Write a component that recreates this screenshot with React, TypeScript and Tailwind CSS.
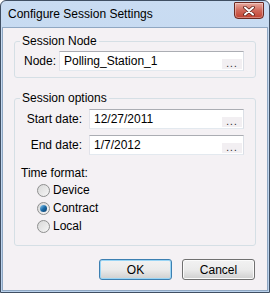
import React from 'react';

const font = { fontFamily: '"Liberation Sans", "Segoe UI", Tahoma, sans-serif' };

function BrowseField({ value, width }: { value: string; width: string }) {
  return (
    <div className={`relative h-[20px] ${width} bg-white border border-[#abadb3] border-r-[#dbdfe6] border-b-[#e3e9ef] border-l-[#e2e3ea] flex items-center pl-[4px] text-[12px] text-black whitespace-nowrap`}>
      <span>{value}</span>
      <div className="absolute right-[1px] bottom-[1px] w-[20px] h-[10px] bg-[#f2eff2] flex items-end justify-center text-[10px] leading-[10px] tracking-[1px] text-[#222]">
        ...
      </div>
    </div>
  );
}

function Radio({ label, checked }: { label: string; checked?: boolean }) {
  return (
    <div className="h-[18px] flex items-center pl-[16px] gap-[3px]">
      <div className="w-[13px] h-[13px] rounded-full border border-[#8e8f8f] bg-gradient-to-br from-[#d8d8d8] to-[#f6f6f6] flex items-center justify-center">
        {checked && (
          <div className="w-[7px] h-[7px] rounded-full bg-gradient-to-br from-[#8fd0f4] via-[#1c6ca8] to-[#0b3c6b]" />
        )}
      </div>
      <span className="text-[12px] leading-[14px] text-black">{label}</span>
    </div>
  );
}

function DialogButton({ label, primary }: { label: string; primary?: boolean }) {
  return (
    <button
      className={`h-[21px] w-[73px] rounded-[3px] border text-[12px] text-black bg-gradient-to-b from-[#f2f2f2] via-[#ebebeb] to-[#cfcfcf] ${
        primary ? 'border-[#3c7fb1] shadow-[inset_0_0_0_1px_#9ad5f5]' : 'border-[#707070] shadow-[inset_0_0_0_1px_#fbfbfb]'
      }`}
    >
      {label}
    </button>
  );
}

export default function App() {
  return (
    <div style={font} className="w-[270px] h-[293px] flex flex-col border border-[#404f63] rounded-t-[6px] bg-gradient-to-b from-[#c9dcf2] to-[#b9d1ec] overflow-hidden">
      <div className="h-[26px] flex items-start justify-between pl-[7px] pr-[5px]">
        <span className="mt-[5px] text-[12px] leading-[16px] text-black">Configure Session Settings</span>
        <div className="mt-[1px] w-[30px] h-[17px] rounded-b-[4px] rounded-t-[1px] border border-[#6b2a22] bg-gradient-to-b from-[#e8aaa0] via-[#d0685a] to-[#c0402f] flex items-center justify-center shadow-[inset_0_0_0_1px_rgba(255,255,255,0.35)]">
          <svg width="12" height="10" viewBox="0 0 12 10">
            <path d="M2 1.5 L10 8.5 M10 1.5 L2 8.5" stroke="#5a2018" strokeWidth="3.6" strokeLinecap="round" />
            <path d="M2 1.5 L10 8.5 M10 1.5 L2 8.5" stroke="#ffffff" strokeWidth="2" strokeLinecap="round" />
          </svg>
        </div>
      </div>

      <div className="flex-1 mx-[1px] mb-[1px] border border-[#8fa7c2] bg-[#f4f1f4] pl-[11px] pt-[6px] whitespace-nowrap">
        <fieldset className="w-[242px] border border-[#d5dfe5] rounded-[3px] pl-[9px] pr-[11px] pb-[6px]">
          <legend className="ml-[-4px] px-[2px] text-[12px] leading-[14px] text-black">Session Node</legend>
          <div className="mt-[3px] flex items-center">
            <span className="w-[35px] text-[12px] text-black">Node:</span>
            <BrowseField value="Polling_Station_1" width="w-[185px]" />
          </div>
        </fieldset>

        <fieldset className="mt-[13px] w-[242px] border border-[#d5dfe5] rounded-[3px] pl-[6px] pr-[11px] pb-[10px]">
          <legend className="ml-[-1px] px-[2px] text-[12px] leading-[14px] text-black">Session options</legend>
          <div className="mt-[4px] flex flex-col gap-[6px]">
            <div className="flex items-center">
              <span className="w-[68px] pr-[7px] text-right text-[12px] text-black">Start date:</span>
              <BrowseField value="12/27/2011" width="w-[155px]" />
            </div>
            <div className="flex items-center">
              <span className="w-[68px] pr-[7px] text-right text-[12px] text-black">End date:</span>
              <BrowseField value="1/7/2012" width="w-[155px]" />
            </div>
          </div>
          <div className="mt-[11px] text-[12px] leading-[14px] text-black">Time format:</div>
          <div className="mt-[1px] flex flex-col">
            <Radio label="Device" />
            <Radio label="Contract" checked />
            <Radio label="Local" />
          </div>
        </fieldset>

        <div className="mt-[13px] w-[241px] flex justify-end gap-[10px]">
          <DialogButton label="OK" primary />
          <DialogButton label="Cancel" />
        </div>
      </div>
    </div>
  );
}
